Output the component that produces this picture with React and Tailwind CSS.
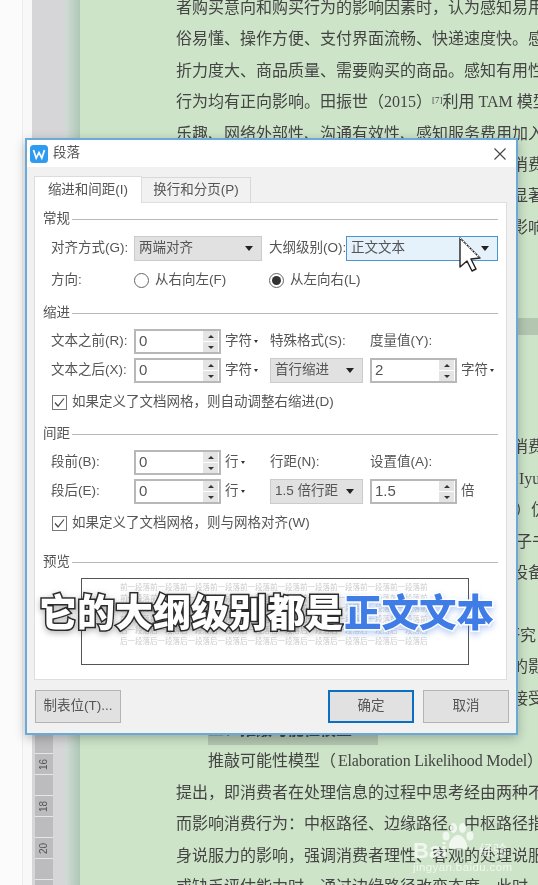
import React from 'react';

const uiFont = "font-['Liberation_Sans','Noto_Sans_CJK_SC',sans-serif]";

const topLines = [
    '者购买意向和购买行为的影响因素时，认为感知易用性',
    '俗易懂、操作方便、支付界面流畅、快递速度快。感知',
    '折力度大、商品质量、需要购买的商品。感知有用性对',
];

const midLines = [
    '乐趣、网络外部性、沟通有效性、感知服务费用加入模型',
    '型中，发现感知有用性、感知易用性均正向影响消费',
    '意愿，其中感知服务费用的负向影响并不十分明显著',
    '性，而感知趣味性和网络外部性对使用意愿产生影响',
    '消费者的使用行为受到多种因素的共同作用。',
    '因此本文将在已有研究的基础上展开讨论。',
];

const lowerLines = [
    { text: '综上所述，可以看出技术接受模型被广泛应用。' },
    { text: '学者们在此基础上加入了不同的外部变量。' },
    { text: '研究对象也逐渐从传统网购扩展到了移动端。' },
    { text: '关于直播电商领域的研究，已经有了一定的成果消费' },
    { text: '者行为方面，国外学者的研究相对较早，有学者 Iyu', cls: 'ml-[3px]' },
    { text: '等人认为电子口碑对购买意愿有着显著的影响力）仿', cls: 'ml-[3px]' },
    { text: '真实验的结果同样表明，用户评论和电子书籍的子书', cls: 'ml-[4px]' },
    { text: '的销售量之间存在正相关，并且移动设备和其他设备' },
    { text: '的差异也不容忽视。' },
    { text: '针对上述问题，本文从信息处理角度出发进行研究', cls: 'ml-[8px]' },
    { text: '信息质量与来源可信度等因素对消费者态度改变的影响' },
    { text: '在不同的涉入程度下，消费者对信息的理解程度接受' },
];

const bottomLines = [
    '提出，即消费者在处理信息的过程中思考经由两种不同',
    '而影响消费行为：中枢路径、边缘路径。中枢路径指信',
    '身说服力的影响，强调消费者理性、客观的处理说服信',
    '或缺乏评估能力时，通过边缘路径改变态度。此时，消',
];

const DocLine = ({ children, className = '' }) => (
    <div className={`h-[31.4px] leading-[31.4px] whitespace-nowrap ${className}`}>{children}</div>
);

const Ruler = () => (
    <div className="w-[18px] mt-[501px] bg-[#bcbcbe] flex flex-col shrink-0">
        {Array.from({ length: 19 }).map((_, i) => (
            <div key={i} className="h-[21px] shrink-0 border-t border-[#e6e6e6] flex items-center justify-center">
                {i % 2 === 0 && (
                    <span className="-rotate-90 text-[10px] text-[#555] font-['Liberation_Sans',sans-serif]">{i + 4}</span>
                )}
            </div>
        ))}
    </div>
);

const Arrow = () => (
    <span className="inline-block w-0 h-0 border-x-[4px] border-t-[5px] border-x-transparent border-t-[#222]" />
);

const TinyArrow = () => (
    <span className="inline-block w-0 h-0 border-x-[2.5px] border-t-[3px] border-x-transparent border-t-[#333]" />
);

const Heading = ({ label, className = '' }) => (
    <div className={`flex items-center h-[20px] ${className}`}>
        <span className="mr-[2px]">{label}</span>
        <div className="flex-1 h-px bg-[#b8b8b8]" />
    </div>
);

const Spin = ({ value }) => (
    <div className="w-[87px] h-[25px] border-2 border-[#b8b8b8] bg-white flex items-center justify-between pl-[3px] text-[15px] text-[#555] shrink-0">
        <span>{value}</span>
        <div className="w-[15px] h-[21px] flex flex-col gap-px mr-px">
            <div className="flex-1 bg-[#e4e4e4] flex items-center justify-center">
                <span className="w-0 h-0 border-x-[3px] border-b-[3px] border-x-transparent border-b-[#333]" />
            </div>
            <div className="flex-1 bg-[#e4e4e4] flex items-center justify-center">
                <span className="w-0 h-0 border-x-[3px] border-t-[3px] border-x-transparent border-t-[#333]" />
            </div>
        </div>
    </div>
);

const GraySelect = ({ label, className = '' }) => (
    <div className={`h-[25px] bg-[#e1e1e1] border border-[#cbcbcb] flex items-center justify-between pl-[4px] pr-[8px] shrink-0 ${className}`}>
        <span>{label}</span>
        <Arrow />
    </div>
);

const Unit = ({ label, arrow = true, className = '' }) => (
    <div className={`flex items-center ml-[4px] gap-[2px] shrink-0 ${className}`}>
        <span>{label}</span>
        {arrow && <TinyArrow />}
    </div>
);

const Check = ({ label, className = '' }) => (
    <div className={`flex items-center h-[20px] pl-[9px] ${className}`}>
        <div className="w-[15px] h-[15px] border border-[#777] flex items-center justify-center mr-[5px] bg-white">
            <svg width="11" height="11" viewBox="0 0 11 11" fill="none" stroke="#444" strokeWidth="1.2">
                <path d="M1 5.5 L4 9 L10 1.5" />
            </svg>
        </div>
        <span>{label}</span>
    </div>
);

const Radio = ({ checked }) => (
    <div className="w-[15px] h-[15px] rounded-full border border-[#666] bg-white flex items-center justify-center shrink-0">
        {checked && <div className="w-[9px] h-[9px] rounded-full bg-[#333]" />}
    </div>
);

const Row = ({ children, className = '' }) => (
    <div className={`flex items-center pl-[8px] h-[25px] ${className}`}>{children}</div>
);

const previewBefore = '前一段落前一段落前一段落前一段落前一段落前一段落前一段落前一段落前一段落前一段落前';
const previewAfter = '后一段落后一段落后一段落后一段落后一段落后一段落后一段落后一段落后一段落后一段落后';

const Preview = () => (
    <div className="ml-[38px] mt-[6px] w-[388px] h-[87px] border border-[#555] bg-white pt-[4px] px-[38px] overflow-hidden text-[7.5px] leading-[10.5px] text-[#cdcdcd] whitespace-nowrap">
        <div>{previewBefore}</div>
        <div>{previewBefore}</div>
        <div>{previewBefore}</div>
        <div>{previewBefore}</div>
        <div className="mt-[1px]">{previewAfter}</div>
        <div>{previewAfter}</div>
    </div>
);

const FootButton = ({ label, primary, className = '' }) => (
    <div
        className={`w-[86px] h-[33px] flex items-center justify-center bg-[#e1e1e1] ${
            primary ? 'border-2 border-[#0a6fc2]' : 'border border-[#b4b4b4]'
        } ${className}`}
    >
        {label}
    </div>
);

const Dialog = () => (
    <div className={`absolute left-[25px] top-[138px] w-[493px] h-[597px] border-2 border-[#6aa9d8] bg-[#f1f1f1] shadow-[0_3px_10px_rgba(0,0,0,0.25)] text-[13.5px] text-[#555] whitespace-nowrap ${uiFont}`}>
        <div className="h-[27px] bg-white flex items-center pl-[3px] pr-[10px]">
            <svg width="18" height="18" viewBox="0 0 18 18" className="shrink-0">
                <rect width="18" height="18" rx="3.5" fill="#2f9bf0" />
                <path d="M3.5 5 L6.2 13 L9 7.5 L11.8 13 L14.5 5" fill="none" stroke="#fff" strokeWidth="1.7" />
            </svg>
            <span className="ml-[5px] flex-1">段落</span>
            <svg width="12" height="12" viewBox="0 0 12 12" stroke="#444" strokeWidth="1.1">
                <path d="M0.5 0.5 L11.5 11.5 M11.5 0.5 L0.5 11.5" />
            </svg>
        </div>

        <div className="pt-[8px] pl-[7px] flex items-end h-[35px]">
            <div className="w-[108px] h-[27px] bg-white border border-b-0 border-[#dcdcdc] flex items-center justify-center relative z-10 -mb-px">
                缩进和间距(I)
            </div>
            <div className="w-[109px] h-[25px] border border-b-0 border-l-0 border-[#d8d8d8] flex items-center justify-center">
                换行和分页(P)
            </div>
        </div>

        <div className="ml-[7px] w-[473px] h-[478px] bg-white border border-[#dedede] pl-[8px] pr-[8px]">
            <Heading label="常规" className="mt-[6px]" />
            <Row className="mt-[7px]">
                <span className="w-[83px] shrink-0">对齐方式(G):</span>
                <GraySelect label="两端对齐" className="w-[128px]" />
                <span className="ml-[7px] w-[77px] shrink-0">大纲级别(O):</span>
                <div className="w-[152px] h-[25px] bg-[#e5f1fb] border border-[#4a94d0] flex items-center justify-between pl-[4px] pr-[8px] shrink-0">
                    <span>正文文本</span>
                    <Arrow />
                </div>
            </Row>
            <Row className="mt-[7px]">
                <span className="w-[83px] shrink-0">方向:</span>
                <Radio />
                <span className="ml-[6px] w-[114px] shrink-0">从右向左(F)</span>
                <Radio checked />
                <span className="ml-[6px]">从左向右(L)</span>
            </Row>

            <Heading label="缩进" className="mt-[10px]" />
            <Row className="mt-[6px]">
                <span className="w-[83px] shrink-0">文本之前(R):</span>
                <Spin value="0" />
                <Unit label="字符" className="w-[45px]" />
                <span className="w-[100px] shrink-0">特殊格式(S):</span>
                <span>度量值(Y):</span>
            </Row>
            <Row className="mt-[4px]">
                <span className="w-[83px] shrink-0">文本之后(X):</span>
                <Spin value="0" />
                <Unit label="字符" className="w-[45px]" />
                <GraySelect label="首行缩进" className="w-[93px]" />
                <div className="w-[7px] shrink-0" />
                <Spin value="2" />
                <Unit label="字符" />
            </Row>
            <Check label="如果定义了文档网格，则自动调整右缩进(D)" className="mt-[9px]" />

            <Heading label="间距" className="mt-[12px]" />
            <Row className="mt-[6px]">
                <span className="w-[83px] shrink-0">段前(B):</span>
                <Spin value="0" />
                <Unit label="行" className="w-[45px]" />
                <span className="w-[100px] shrink-0">行距(N):</span>
                <span>设置值(A):</span>
            </Row>
            <Row className="mt-[4px]">
                <span className="w-[83px] shrink-0">段后(E):</span>
                <Spin value="0" />
                <Unit label="行" className="w-[45px]" />
                <GraySelect label="1.5 倍行距" className="w-[93px]" />
                <div className="w-[7px] shrink-0" />
                <Spin value="1.5" />
                <Unit label="倍" arrow={false} />
            </Row>
            <Check label="如果定义了文档网格，则与网格对齐(W)" className="mt-[9px]" />

            <Heading label="预览" className="mt-[19px]" />
            <Preview />
        </div>

        <div className="mt-[10px] pl-[8px] pr-[7px] flex items-center">
            <FootButton label="制表位(T)..." />
            <div className="flex-1" />
            <FootButton label="确定" primary />
            <FootButton label="取消" className="ml-[9px]" />
        </div>
    </div>
);

const Cursor = () => (
    <svg className="absolute left-[458px] top-[236px]" width="26" height="38" viewBox="0 0 26 38">
        <path
            d="M2 2 L2 31 L9 25 L14 35 L18 33 L13 23 L22 22 Z"
            fill="#fff"
            stroke="#222"
            strokeWidth="1.4"
            strokeLinejoin="round"
        />
        <path d="M2 2 L22 22" fill="none" stroke="#fff" strokeWidth="1" strokeDasharray="2 2" />
    </svg>
);

const Caption = () => (
    <div className="absolute left-[39px] top-[587px] flex text-[38px] leading-[46px] font-black whitespace-nowrap font-['Noto_Sans_CJK_SC',sans-serif]">
        <span className="text-white [-webkit-text-stroke:3px_#2b2b2b] [paint-order:stroke_fill] drop-shadow-[0_2px_3px_rgba(0,0,0,0.3)]">它的大纲级别都是</span>
        <span className="ml-[1px] text-[37.5px] text-[#3f7ce6] [-webkit-text-stroke:3px_#fff] [paint-order:stroke_fill] drop-shadow-[0_3px_3px_rgba(63,124,230,0.35)]">正文文本</span>
    </div>
);

const Watermark = () => (
    <div className="absolute left-[413px] top-[822px] w-[100px] h-[54px] text-white/70 font-['Liberation_Sans',sans-serif]">
        <svg className="absolute left-[28px] top-0" width="34" height="30" viewBox="0 0 34 30" fill="currentColor">
            <ellipse cx="5" cy="14" rx="3.5" ry="4.5" />
            <ellipse cx="12.5" cy="6" rx="3.5" ry="5" />
            <ellipse cx="21.5" cy="6" rx="3.5" ry="5" />
            <ellipse cx="29" cy="14" rx="3.5" ry="4.5" />
            <path d="M17 13 C12 13 8 20 8 24 C8 29 14 27 17 27 C20 27 26 29 26 24 C26 20 22 13 17 13 Z" />
        </svg>
        <span className="absolute left-0 top-[17px] text-[22px] leading-[24px] font-bold">Bai</span>
        <span className="absolute left-[66px] top-[18px] text-[14px] leading-[18px] font-['Noto_Sans_CJK_SC',sans-serif]">经验</span>
        <span className="absolute left-0 top-[38px] text-[11.5px] leading-[14px] tracking-[0.4px]">jingyan.baidu.com</span>
    </div>
);

const App = () => {
    return (
        <div className="relative w-[538px] h-[885px] overflow-hidden flex bg-white blur-[0.4px]">
            <div className="w-[23px] bg-[#fbfbfb] border-r border-[#ececec] shrink-0" />
            <div className="w-[9px] bg-[#f8f8f9] shrink-0" />
            <div className="w-[33px] bg-[#d6d6d9] shrink-0 flex pl-[3px]">
                <Ruler />
            </div>
            <div className="w-[15px] bg-gradient-to-r from-[#d3dbd8] to-[#aec8b6] shrink-0" />
            <div className="flex-1 bg-[#cde4c9] overflow-hidden -mt-[8px] pl-[96px] text-[16px] text-[#444] font-['Liberation_Serif','Noto_Sans_CJK_SC',serif]">
                {topLines.map((line) => (
                    <DocLine key={line}>{line}</DocLine>
                ))}
                <DocLine>
                    行为均有正向影响。田振世（2015）<sup className="text-[9px] leading-none">[7]</sup>利用 TAM 模型
                </DocLine>
                {midLines.map((line) => (
                    <DocLine key={line}>{line}</DocLine>
                ))}
                <DocLine className="pt-[12px]">
                    <div className="h-[17px] bg-[#b2c6b0] -ml-[96px]" />
                </DocLine>
                {lowerLines.map((line) => (
                    <DocLine key={line.text}>
                        <div className={line.cls}>{line.text}</div>
                    </DocLine>
                ))}
                <DocLine className="ml-[32px] w-[170px] bg-[#b2c6b0] font-bold">二、推敲可能性模型</DocLine>
                <DocLine className="ml-[32px]">
                    推敲可能性模型（<span className="ml-[2px] tracking-[-0.2px]">Elaboration Likelihood Model</span>）
                </DocLine>
                {bottomLines.map((line) => (
                    <DocLine key={line}>{line}</DocLine>
                ))}
            </div>

            <Watermark />
            <Dialog />
            <Cursor />
            <Caption />
        </div>
    );
};

export default App;
